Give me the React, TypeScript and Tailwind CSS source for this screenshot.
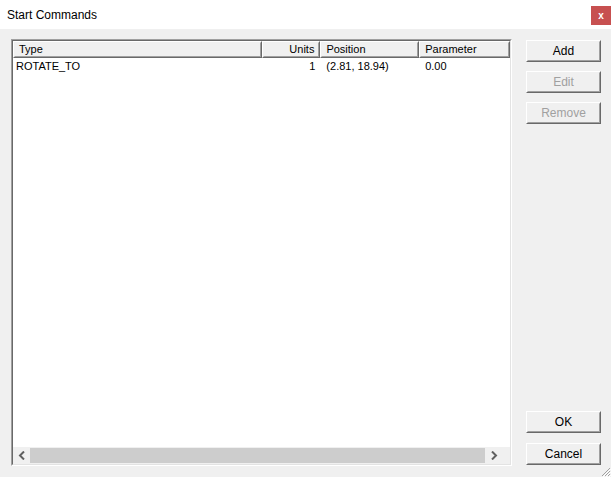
import React from "react";

const columns = [
  { label: "Type", width: "w-[249px]", align: "text-left" },
  { label: "Units", width: "w-[59px]", align: "text-right" },
  { label: "Position", width: "w-[99px]", align: "text-left" },
  { label: "Parameter", width: "w-[91px]", align: "text-left" },
];

const rows = [{ type: "ROTATE_TO", units: "1", position: "(2.81, 18.94)", parameter: "0.00" }];

function Button({ label, disabled = false, className = "" }: { label: string; disabled?: boolean; className?: string }) {
  return (
    <div
      className={`h-[22px] w-[75px] border border-t-white border-l-white border-r-[#696969] border-b-[#696969] bg-[#f0f0f0] ${className}`}
    >
      <div
        className={`flex h-full w-full items-center justify-center border border-transparent border-r-[#a0a0a0] border-b-[#a0a0a0] text-[12px] ${
          disabled ? "text-[#a0a0a0]" : "text-black"
        }`}
      >
        {label}
      </div>
    </div>
  );
}

export default function App() {
  return (
    <div className="flex h-[477px] w-[611px] flex-col bg-[#f0f0f0] font-['Liberation_Sans',Arial,sans-serif] text-[11px] text-black">
      {/* title bar */}
      <div className="flex h-[29px] items-start justify-between bg-white">
        <span className="mt-[6px] ml-[7px] text-[12px] text-black">Start Commands</span>
        <div className="mt-[6px] flex h-[19px] w-[20px] items-center justify-center bg-[#c75050] text-[10px] font-bold text-white">
          x
        </div>
      </div>

      <div className="relative flex flex-1 pt-[10px] pl-[11px]">
        {/* list view */}
        <div className="h-[427px] w-[501px] border border-t-[#a0a0a0] border-l-[#a0a0a0] border-r-white border-b-white">
          <div className="flex h-full w-full flex-col border border-t-[#696969] border-l-[#696969] border-r-[#e3e3e3] border-b-[#e3e3e3] bg-white">
            <div className="flex h-[17px] shrink-0">
              {columns.map((c) => (
                <div
                  key={c.label}
                  className={`${c.width} border border-t-white border-l-white border-r-[#696969] border-b-[#696969] bg-[#f0f0f0]`}
                >
                  <div
                    className={`h-full border border-transparent border-r-[#a0a0a0] border-b-[#a0a0a0] px-[4px] leading-[13px] ${c.align}`}
                  >
                    {c.label}
                  </div>
                </div>
              ))}
              <div className="flex-1 bg-[#f0f0f0] border-b border-b-[#a0a0a0]" />
            </div>

            <div className="flex-1">
              {rows.map((r) => (
                <div key={r.type} className="flex h-[17px] items-center">
                  <div className="w-[249px] px-[3px]">{r.type}</div>
                  <div className="w-[59px] px-[5px] text-right">{r.units}</div>
                  <div className="w-[99px] px-[6px]">{r.position}</div>
                  <div className="w-[91px] px-[6px]">{r.parameter}</div>
                </div>
              ))}
            </div>

            {/* horizontal scrollbar */}
            <div className="flex h-[17px] shrink-0 items-center bg-[#f0f0f0]">
              <div className="flex h-full w-[17px] items-center justify-center">
                <svg width="8" height="9" viewBox="0 0 8 9">
                  <path d="M6 0.5 L2 4.5 L6 8.5" fill="none" stroke="#606060" strokeWidth="2" />
                </svg>
              </div>
              <div className="h-[15px] flex-1 bg-[#cdcdcd]" />
              <div className="flex h-full w-[17px] items-center justify-center">
                <svg width="8" height="9" viewBox="0 0 8 9">
                  <path d="M2 0.5 L6 4.5 L2 8.5" fill="none" stroke="#606060" strokeWidth="2" />
                </svg>
              </div>
              <div className="h-full w-[8px] bg-[#f0f0f0]" />
            </div>
          </div>
        </div>

        {/* buttons */}
        <div className="ml-[14px] flex h-[427px] flex-col pt-[1px]">
          <Button label="Add" />
          <Button label="Edit" disabled className="mt-[9px]" />
          <Button label="Remove" disabled className="mt-[9px]" />
          <div className="flex-1" />
          <Button label="OK" className="border-[#696969] border-t-[#696969] border-l-[#696969]" />
          <Button label="Cancel" className="mt-[10px] mb-[1px]" />
        </div>

        {/* resize grip */}
        <svg className="absolute right-0 bottom-0" width="12" height="12" viewBox="0 0 12 12">
          <path d="M11 3 L3 11 M11 6 L6 11 M11 9 L9 11" stroke="#a0a0a0" strokeWidth="1" />
          <path d="M12 4 L4 12 M12 7 L7 12 M12 10 L10 12" stroke="#ffffff" strokeWidth="1" />
        </svg>
      </div>
    </div>
  );
}
